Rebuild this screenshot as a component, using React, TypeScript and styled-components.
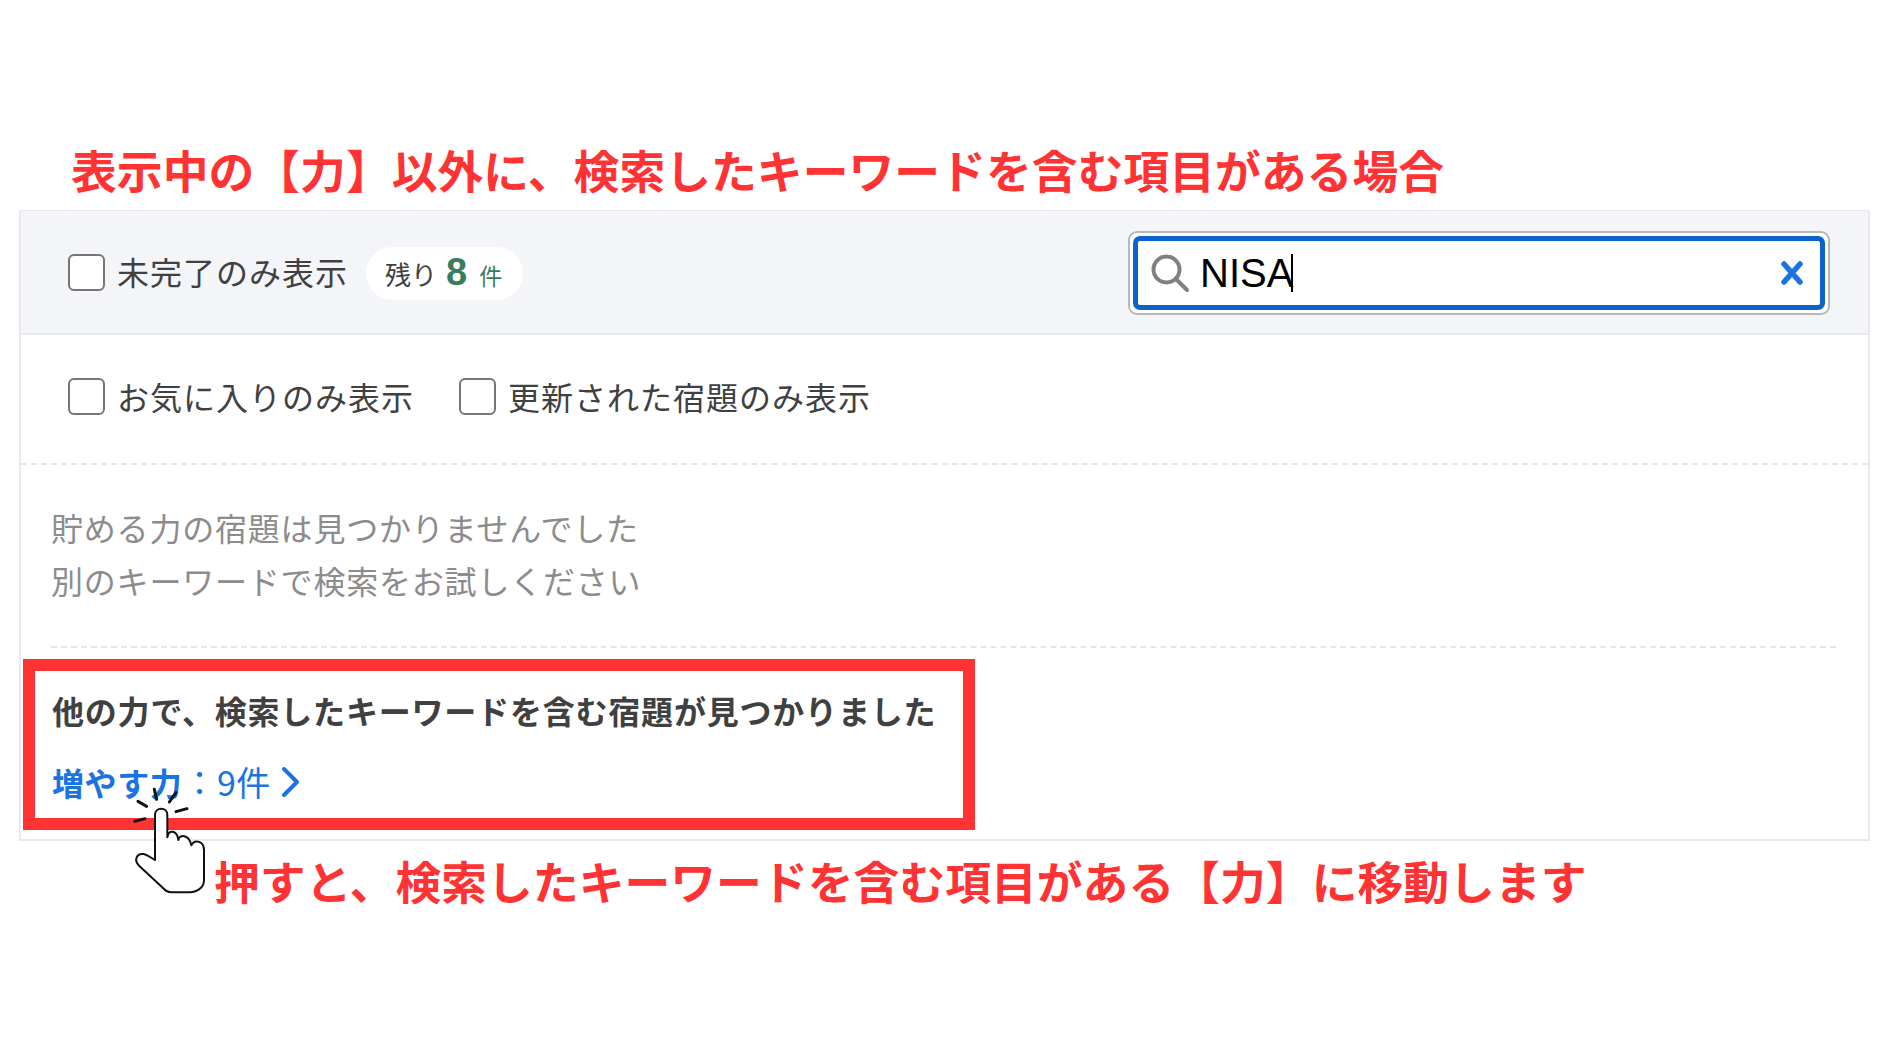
import React from "react";
import styled, { createGlobalStyle } from "styled-components";

const Global = createGlobalStyle`
  html, body { margin: 0; padding: 0; background: #fff; }
  body { font-family: "Noto Sans CJK JP", "Liberation Sans", sans-serif; }
`;

const Page = styled.div`
  position: relative;
  width: 1890px;
  height: 1063px;
  padding: 139px 0 0 19px;
  box-sizing: border-box;
  overflow: hidden;
`;

const Notice = styled.div<{ $indent: number }>`
  margin-left: ${(p) => p.$indent}px;
  color: #ff3333;
  font-size: 45.82px;
  font-weight: 700;
  line-height: 60px;
  height: 60px;
  white-space: nowrap;
`;

const Panel = styled.section`
  width: 1851px;
  height: 631px;
  margin: 11px 0 9px;
  border: 2px solid #e8e9ea;
  box-sizing: border-box;
  background: #fff;
`;

const Header = styled.div`
  height: 124px;
  margin-top: -1px;
  box-sizing: border-box;
  display: flex;
  align-items: center;
  justify-content: space-between;
  padding: 0 38px 0 47px;
  background: #f4f5f9;
  border-bottom: 2px solid #e8e9ea;
`;

const Group = styled.div`
  display: flex;
  align-items: center;
`;

const Check = styled.label<{ $gap?: number }>`
  display: flex;
  align-items: center;
  gap: 12px;
  margin-right: ${(p) => p.$gap ?? 0}px;
  padding-bottom: 2px;
  color: #404040;
  font-size: 32px;
  letter-spacing: 1px;
  line-height: 40px;
  white-space: nowrap;
`;

const Box = styled.span`
  width: 37px;
  height: 37px;
  margin-top: 2px;
  box-sizing: border-box;
  border: 2px solid #767676;
  border-radius: 6px;
  background: #fff;
`;

const Badge = styled.div`
  display: flex;
  align-items: baseline;
  height: 53px;
  line-height: 51px;
  box-sizing: border-box;
  margin: 2px 0 0 18px;
  padding: 0 21px 0 19px;
  border-radius: 27px;
  background: #fff;
  color: #404040;
  font-size: 26px;
  white-space: nowrap;
`;

const Count = styled.span`
  margin-left: 9px;
  color: #3a7d5c;
  font-family: "Liberation Sans", sans-serif;
  font-size: 38px;
  font-weight: 700;
`;

const Unit = styled.span`
  margin-left: 12px;
  color: #3a7d5c;
  font-size: 23px;
`;

const SearchRing = styled.div`
  width: 702px;
  height: 84px;
  margin-top: 2px;
  box-sizing: border-box;
  padding: 3px;
  border: 2px solid #b8b8b8;
  border-radius: 9px;
  background: #fff;
`;

const Search = styled.div`
  height: 100%;
  box-sizing: border-box;
  display: flex;
  align-items: center;
  padding: 0 16px 0 12px;
  border: 5px solid #0a64cc;
  border-radius: 7px;
  background: #fff;
`;

const Query = styled.div`
  flex: 1;
  display: flex;
  align-items: center;
  margin-left: 10px;
  color: #000;
  font-family: "Liberation Sans", sans-serif;
  font-size: 40px;
  line-height: 46px;
`;

const Caret = styled.span`
  width: 2px;
  height: 38px;
  margin-left: -2px;
  background: #000;
`;

const Filters = styled.div`
  height: 130px;
  box-sizing: border-box;
  display: flex;
  align-items: center;
  padding: 0 0 5px 47px;
  border-bottom: 2px dashed #e6e6e6;
`;

const Empty = styled.div`
  height: 183px;
  margin: 0 32px 0 30px;
  padding-top: 36px;
  box-sizing: border-box;
  border-bottom: 2px dashed #e6e6e6;
  color: #8c8c8c;
  font-size: 32px;
  letter-spacing: 0.8px;
  line-height: 53px;
`;

const Found = styled.div`
  width: 952px;
  height: 171px;
  margin: 11px 0 0 2px;
  box-sizing: border-box;
  padding: 17px 0 0 17px;
  border: 12px solid #ff3333;
`;

const FoundTitle = styled.div`
  color: #404040;
  font-size: 32px;
  font-weight: 700;
  letter-spacing: 0.8px;
  line-height: 44px;
  white-space: nowrap;
`;

const Link = styled.div`
  display: flex;
  align-items: center;
  gap: 9px;
  margin-top: 28px;
  color: #1a73e0;
  font-size: 32px;
  line-height: 44px;
  white-space: nowrap;
`;

const LinkName = styled.span`
  font-weight: 700;
  letter-spacing: 0.6px;
`;

const LinkCount = styled.span`
  font-size: 34px;
  letter-spacing: 0.5px;
`;

const Pointer = styled.svg`
  position: absolute;
  left: 100px;
  top: 760px;
  width: 160px;
  height: 150px;
`;

export default function App() {
  return (
    <Page>
      <Global />
      <Notice $indent={52}>表示中の【力】以外に、検索したキーワードを含む項目がある場合</Notice>
      <Panel>
        <Header>
          <Group>
            <Check>
              <Box />
              未完了のみ表示
            </Check>
            <Badge>
              残り<Count>8</Count>
              <Unit>件</Unit>
            </Badge>
          </Group>
          <SearchRing>
            <Search>
              <svg width="40" height="40" viewBox="0 0 40 40" fill="none" stroke="#808080" strokeWidth="4" strokeLinecap="round">
                <circle cx="16.5" cy="16.5" r="13" />
                <path d="M26 26l11 11" />
              </svg>
              <Query>
                NISA
                <Caret />
              </Query>
              <svg width="24" height="24" viewBox="0 0 24 24" fill="none" stroke="#1a73e0" strokeWidth="5.5" strokeLinecap="round">
                <path d="M4 3l16 18M20 3L4 21" />
              </svg>
            </Search>
          </SearchRing>
        </Header>
        <Filters>
          <Check $gap={45}>
            <Box />
            お気に入りのみ表示
          </Check>
          <Check>
            <Box />
            更新された宿題のみ表示
          </Check>
        </Filters>
        <Empty>
          貯める力の宿題は見つかりませんでした
          <br />
          別のキーワードで検索をお試しください
        </Empty>
        <Found>
          <FoundTitle>他の力で、検索したキーワードを含む宿題が見つかりました</FoundTitle>
          <Link>
            <span>
              <LinkName>増やす力</LinkName>
              <LinkCount>：9件</LinkCount>
            </span>
            <svg width="20" height="32" viewBox="0 0 20 32" fill="none" stroke="#1a73e0" strokeWidth="4" strokeLinecap="round" strokeLinejoin="round">
              <path d="M4 3l13 13L4 29" />
            </svg>
          </Link>
        </Found>
      </Panel>
      <Notice $indent={195}>押すと、検索したキーワードを含む項目がある【力】に移動します</Notice>
      <Pointer viewBox="0 0 480 450">
        <g fill="none" stroke="#111" strokeWidth="9" strokeLinecap="round">
          <path d="M114 124l26 15M163 88l7 30M228 98l-20 28M228 155l33-9M104 184l31-8" />
        </g>
        <path
          d="M165 300L165 165C165 140 202 140 202 165L202 232C205 205 232 212 235 240C238 222 268 222 274 256C285 235 312 245 312 270L312 360C312 385 290 397 260 397L215 397C200 397 195 390 185 380L118 318C100 300 110 280 130 282C140 283 150 292 165 300Z"
          fill="#fff"
          stroke="#111"
          strokeWidth="6"
          strokeLinejoin="round"
        />
      </Pointer>
    </Page>
  );
}
